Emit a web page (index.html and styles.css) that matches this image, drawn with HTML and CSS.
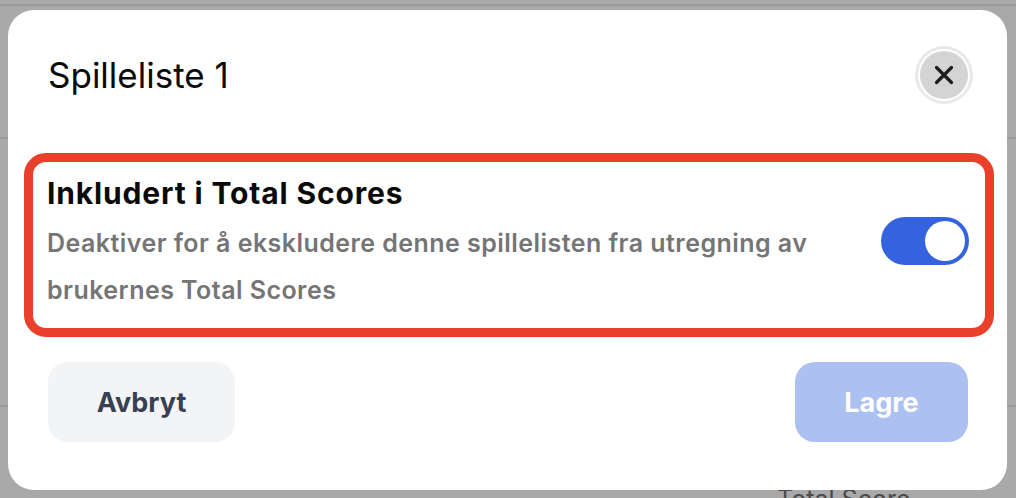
FILE: index.html
```html
<!DOCTYPE html>
<html lang="no">
<head>
<meta charset="utf-8">
<title>Spilleliste 1</title>
<link rel="stylesheet" href="styles.css">
</head>
<body>
<div class="bg">
  <div class="bg-top"></div>
  <div class="bg-row bg-row-1"></div>
  <div class="bg-row bg-row-2"></div>
  <div class="bg-score">Total Score</div>
</div>
<div class="overlay">
  <div class="modal">
    <div class="modal-header">
      <h2 class="modal-title">Spilleliste 1</h2>
      <button class="close-btn" aria-label="Lukk">
        <svg width="24" height="24" viewBox="0 0 24 24"><path d="M4.5 4.5 L19.5 19.5 M19.5 4.5 L4.5 19.5" stroke="#1c1c1c" stroke-width="3.2" stroke-linecap="round" fill="none"/></svg>
      </button>
    </div>
    <div class="setting">
      <div class="setting-text">
        <div class="setting-title">Inkludert i Total Scores</div>
        <div class="setting-desc">Deaktiver for å ekskludere denne spillelisten fra utregning av brukernes Total Scores</div>
      </div>
      <div class="toggle"><div class="knob"></div></div>
    </div>
    <div class="actions">
      <button class="btn btn-cancel">Avbryt</button>
      <button class="btn btn-save">Lagre</button>
    </div>
  </div>
</div>
</body>
</html>
```
FILE: styles.css
```css
* { box-sizing: border-box; }
html, body { margin: 0; padding: 0; }
body {
  width: 1016px;
  height: 498px;
  overflow: hidden;
  background: #a9a9a9;
  font-family: Inter, "Liberation Sans", sans-serif;
  position: relative;
}
.bg { height: 498px; }
.bg-top { height: 6px; border-bottom: 2px solid #999999; }
.bg-row-1 { height: 133px; border-bottom: 2px solid #9c9c9c; }
.bg-row-2 { height: 268px; border-bottom: 2px solid #9c9c9c; }
.bg-score {
  padding-left: 777px;
  padding-top: 77px;
  font-size: 25px;
  line-height: 30px;
  color: #4a4a4a;
}
.overlay {
  position: absolute;
  inset: 0;
  display: flex;
  padding: 10px 9px 8px 8px;
}
.modal {
  flex: 1;
  background: #ffffff;
  border-radius: 26px;
  padding: 41px 39px 48px 40px;
  display: flex;
  flex-direction: column;
}
.modal-header {
  display: flex;
  align-items: center;
  justify-content: space-between;
  height: 48px;
}
.modal-title {
  margin: 0;
  font-size: 35px;
  font-weight: 400;
  color: #0a0a0a;
}
.close-btn {
  width: 48px;
  height: 48px;
  border-radius: 50%;
  border: none;
  background: #d4d4d4;
  box-shadow: 0 0 0 2px #ffffff, 0 0 0 5px #e9e9e9;
  display: flex;
  align-items: center;
  justify-content: center;
  padding: 0;
}
.setting {
  margin: 54px -26px 0 -24px;
  border: 9px solid #e8402a;
  border-radius: 22px;
  padding: 14px 16px 14px 14px;
  display: flex;
  align-items: center;
  justify-content: space-between;
}
.setting-title {
  font-size: 30px;
  line-height: 34px;
  font-weight: 700;
  color: #0a0a0a;
  margin-bottom: 10px;
  letter-spacing: 0.85px;
}
.setting-desc {
  font-size: 25px;
  line-height: 47px;
  font-weight: 600;
  color: #757575;
  letter-spacing: 0.45px;
  max-width: 800px;
}
.toggle {
  flex: none;
  width: 88px;
  height: 48px;
  border-radius: 24px;
  background: #3563e0;
  padding: 4px;
  display: flex;
  justify-content: flex-end;
  margin-bottom: 8px;
}
.knob {
  width: 40px;
  height: 40px;
  border-radius: 50%;
  background: #ffffff;
}
.actions {
  margin-top: 25px;
  display: flex;
  justify-content: space-between;
}
.btn {
  height: 80px;
  border: none;
  border-radius: 20px;
  font-family: Inter, "Liberation Sans", sans-serif;
  font-size: 27px;
  font-weight: 700;
}
.btn-cancel {
  width: 187px;
  background: #f3f4f6;
  color: #374151;
}
.btn-save {
  width: 173px;
  background: #3563e0;
  color: #ffffff;
  opacity: 0.4;
}
```
